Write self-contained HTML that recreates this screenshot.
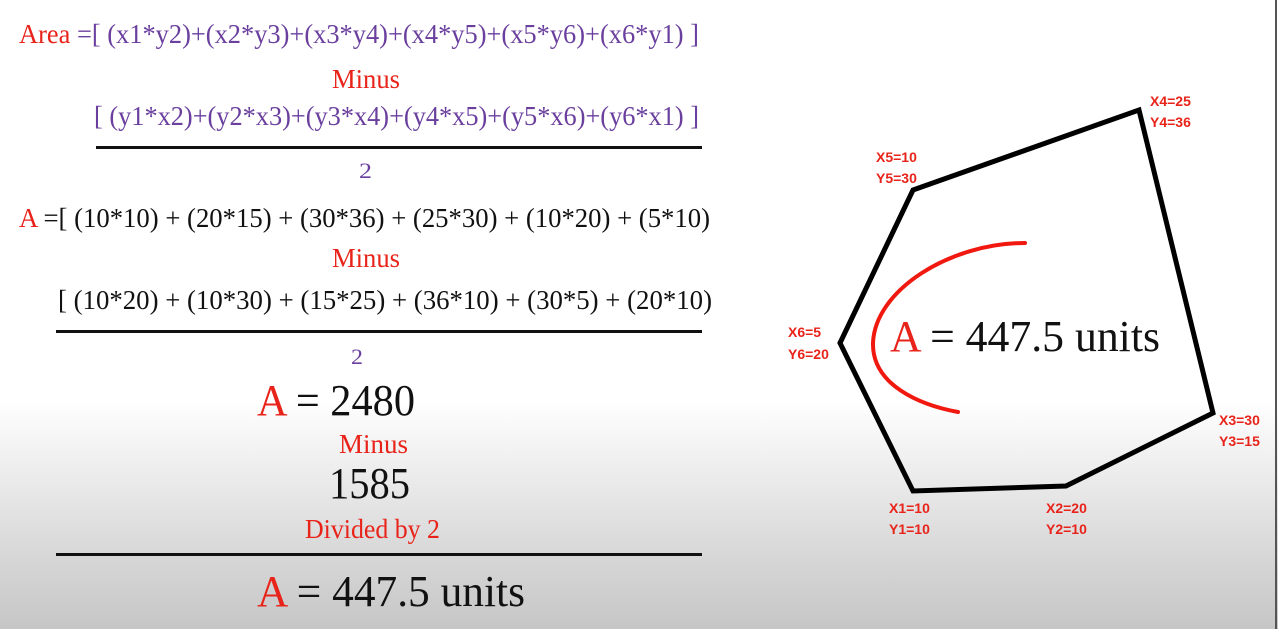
<!DOCTYPE html>
<html><head><meta charset="utf-8"><style>
html,body{margin:0;padding:0;width:1278px;height:629px;overflow:hidden}
body{background:linear-gradient(to bottom,#fff 0,#fff 400px,#ededed 470px,#d6d6d6 560px,#c6c6c6 629px)}
svg{position:absolute;left:0;top:0}
.s{font-family:"Liberation Serif",serif}
.p{fill:#6a3f9e}.r{fill:#e8231a}.k{fill:#111}
.l{font-family:"Liberation Sans",sans-serif;font-weight:bold;font-size:14px;fill:#e8231a}
</style></head><body>
<svg width="1278" height="629" viewBox="0 0 1278 629">
<rect x="1275" y="0" width="2" height="629" fill="#555"/>
<g class="s" font-size="27">
<text x="19" y="43" textLength="680" lengthAdjust="spacingAndGlyphs"><tspan class="r">Area </tspan><tspan class="p">=[ (x1*y2)+(x2*y3)+(x3*y4)+(x4*y5)+(x5*y6)+(x6*y1) ]</tspan></text>
<text class="r" x="332" y="88" textLength="68" lengthAdjust="spacingAndGlyphs">Minus</text>
<text class="p" x="94" y="125" textLength="605" lengthAdjust="spacingAndGlyphs">[ (y1*x2)+(y2*x3)+(y3*x4)+(y4*x5)+(y5*x6)+(y6*x1) ]</text>
<text class="p" x="359" y="178" font-size="22" textLength="13" lengthAdjust="spacingAndGlyphs">2</text>
<text x="19" y="227" textLength="691" lengthAdjust="spacingAndGlyphs"><tspan class="r">A </tspan><tspan class="k">=[ (10*10) + (20*15) + (30*36) + (25*30)  + (10*20) + (5*10)</tspan></text>
<text class="r" x="332" y="267" textLength="68" lengthAdjust="spacingAndGlyphs">Minus</text>
<text class="k" x="58" y="309" textLength="654" lengthAdjust="spacingAndGlyphs">[ (10*20) + (10*30) + (15*25) + (36*10) + (30*5)  + (20*10)</text>
<text class="p" x="351" y="364" font-size="22" textLength="12" lengthAdjust="spacingAndGlyphs">2</text>
<text x="257" y="415" font-size="44" textLength="158" lengthAdjust="spacingAndGlyphs"><tspan class="r">A</tspan><tspan class="k"> = 2480</tspan></text>
<text class="r" x="339" y="453" textLength="69" lengthAdjust="spacingAndGlyphs">Minus</text>
<text class="k" x="329" y="498" font-size="44" textLength="81" lengthAdjust="spacingAndGlyphs">1585</text>
<text class="r" x="305" y="538" textLength="135" lengthAdjust="spacingAndGlyphs">Divided by 2</text>
<text x="257" y="606" font-size="44" textLength="268" lengthAdjust="spacingAndGlyphs"><tspan class="r">A</tspan><tspan class="k"> = 447.5 units</tspan></text>
<text x="890" y="351" font-size="44" textLength="270" lengthAdjust="spacingAndGlyphs"><tspan class="r">A</tspan><tspan class="k"> = 447.5 units</tspan></text>
</g>
<rect x="96" y="146" width="606" height="3" fill="#111"/>
<rect x="56" y="330" width="646" height="3" fill="#111"/>
<rect x="56" y="553" width="646" height="3" fill="#111"/>
<polygon points="913,190 1139,110 1213,413 1066,486 913,491 840,343" fill="none" stroke="#000" stroke-width="5" stroke-linejoin="miter"/>
<path d="M1025,243 C950,243 875,290 873,343 C872,385 920,405 958,412" fill="none" stroke="#f0180f" stroke-width="4" stroke-linecap="round"/>
<g class="l">
<text x="1150" y="106">X4=25</text><text x="1150" y="127">Y4=36</text>
<text x="876" y="162">X5=10</text><text x="876" y="183">Y5=30</text>
<text x="788" y="337">X6=5</text><text x="788" y="359">Y6=20</text>
<text x="1219" y="425">X3=30</text><text x="1219" y="446">Y3=15</text>
<text x="889" y="513">X1=10</text><text x="889" y="534">Y1=10</text>
<text x="1046" y="513">X2=20</text><text x="1046" y="534">Y2=10</text>
</g>
</svg>
</body></html>
